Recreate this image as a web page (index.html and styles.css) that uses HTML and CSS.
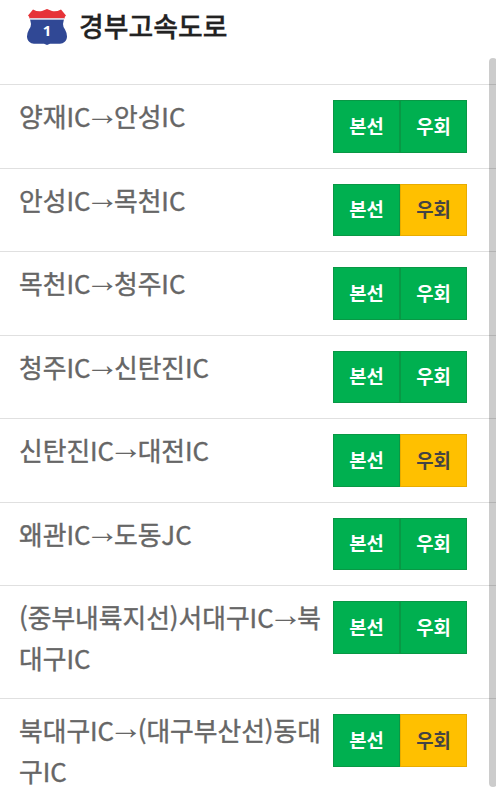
FILE: index.html
```
<!DOCTYPE html>
<html lang="ko">
<head>
<meta charset="utf-8">
<title>경부고속도로</title>
<link rel="stylesheet" href="styles.css">
</head>
<body>
<header class="head">
  <svg class="shield" viewBox="0 0 40 36" width="40" height="36">
    <path fill="#304895" d="M3 10H37L36 15Q36 18 38 20.500Q40 24 40 27.500C40 32 36.500 34.700 33 34.700H23L20 36L17 34.700H7C3.500 34.700 0 32 0 27.500Q0 24 2 20.500Q4 18 4 15Z"/>
    <path fill="#e63338" d="M6 .5Q11 3.200 15 2L20 0L25 2Q29 3.200 34 .5L39 6.500Q37.500 7.500 37.500 9.500H2.500Q2.500 7.500 1 6.500Z"/>
    <path fill="#dce0ea" d="M3 9.300H37V10.800H3Z"/>
    <text class="shield-no" x="20" y="26.500" text-anchor="middle">1</text>
  </svg>
  <h1 class="title">경부고속도로</h1>
</header>
<ul class="list">
  <li class="row"><span class="name">양재IC<span class="arrow">→</span>안성IC</span><div class="group"><button class="btn">본선</button><button class="btn">우회</button></div></li>
  <li class="row"><span class="name">안성IC<span class="arrow">→</span>목천IC</span><div class="group"><button class="btn">본선</button><button class="btn slow">우회</button></div></li>
  <li class="row"><span class="name">목천IC<span class="arrow">→</span>청주IC</span><div class="group"><button class="btn">본선</button><button class="btn">우회</button></div></li>
  <li class="row"><span class="name">청주IC<span class="arrow">→</span>신탄진IC</span><div class="group"><button class="btn">본선</button><button class="btn">우회</button></div></li>
  <li class="row"><span class="name">신탄진IC<span class="arrow">→</span>대전IC</span><div class="group"><button class="btn">본선</button><button class="btn slow">우회</button></div></li>
  <li class="row"><span class="name">왜관IC<span class="arrow">→</span>도동JC</span><div class="group"><button class="btn">본선</button><button class="btn">우회</button></div></li>
  <li class="row"><span class="name">(중부내륙지선)서대구IC<span class="arrow">→</span>북대구IC</span><div class="group"><button class="btn">본선</button><button class="btn">우회</button></div></li>
  <li class="row"><span class="name">북대구IC<span class="arrow">→</span>(대구부산선)동대구IC</span><div class="group"><button class="btn">본선</button><button class="btn slow">우회</button></div></li>
</ul>
<div class="scrollbar"></div>
</body>
</html>
```
FILE: styles.css
```
* { box-sizing: border-box; }
html, body { height: 796px; overflow: hidden; }
body {
  margin: 0;
  background: #fff;
  color: #666;
  font-family: "Noto Sans CJK KR", sans-serif;
}
.head {
  display: flex;
  align-items: flex-start;
  height: 84px;
  padding: 9px 0 0 27px;
}
.shield { display: block; flex: none; }
.shield-no {
  fill: #fff;
  font: 700 15px "Open Sans", "Noto Sans", sans-serif;
}
.title {
  margin: -3px 0 0 12px;
  color: #222;
  font-size: 26.9px;
  font-weight: 500;
  line-height: 40px;
  -webkit-text-stroke: .3px #222;
}
.list { margin: 0; padding: 0; list-style: none; }
.row {
  display: flex;
  align-items: flex-start;
  height: 83.5px;
  padding: 15px 29px 15px 19px;
  border-top: 1px solid #e0e0e0;
}
.row:nth-child(n+7) { height: 113px; }
.name {
  width: 306px;
  margin: -5px 8px 0 0;
  font-size: 25.75px;
  font-weight: 400;
  line-height: 41px;
  flex: none;
  word-break: break-all;
  -webkit-text-stroke: .4px #666;
}
.arrow {
  margin: 0 -5.2px;
  position: relative;
  top: -2px;
  font-family: "Liberation Sans", sans-serif;
  font-size: 34px;
  line-height: 0;
  -webkit-text-stroke: 0;
}
.group { display: flex; flex: none; }
.btn {
  width: 67px;
  height: 52.5px;
  padding: 0 0 2px;
  border: 1px solid #099845;
  background: #00b050;
  color: #fff;
  font: 700 18.800px "Noto Sans CJK KR", sans-serif;
}
.slow { border-color: #e8ac00; background: #ffc000; color: #444; }
.scrollbar {
  position: absolute;
  top: 58px;
  left: 489px;
  width: 8px;
  height: 729px;
  border-radius: 4px;
  background: rgba(0, 0, 0, .2);
}
```
